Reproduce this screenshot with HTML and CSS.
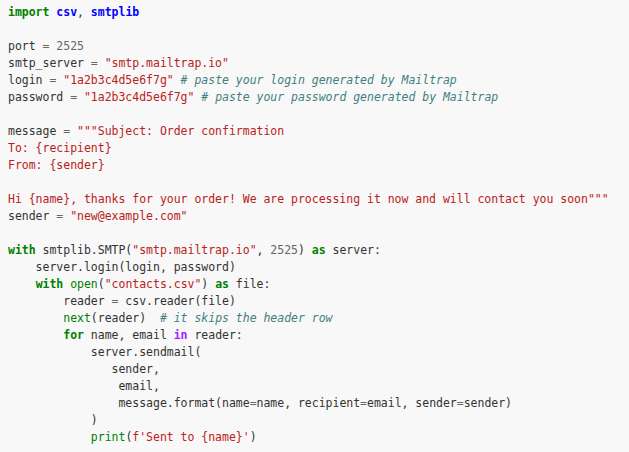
FILE: index.html
```html
<!DOCTYPE html>
<html lang="en">
<head>
<meta charset="utf-8">
<title>Code</title>
<link rel="stylesheet" href="styles.css">
</head>
<body>
<pre class="code"><span class="k">import</span> <span class="nn">csv</span>, <span class="nn">smtplib</span>

port <span class="o">=</span> <span class="m">2525</span>
smtp_server <span class="o">=</span> <span class="s">"smtp.mailtrap.io"</span>
login <span class="o">=</span> <span class="s">"1a2b3c4d5e6f7g"</span> <span class="c"># paste your login generated by Mailtrap</span>
password <span class="o">=</span> <span class="s">"1a2b3c4d5e6f7g"</span> <span class="c"># paste your password generated by Mailtrap</span>

message <span class="o">=</span> <span class="s">"""Subject: Order confirmation
To: {recipient}
From: {sender}

Hi {name}, thanks for your order! We are processing it now and will contact you soon"""</span>
sender <span class="o">=</span> <span class="s">"new@example.com"</span>

<span class="k">with</span> smtplib.SMTP(<span class="s">"smtp.mailtrap.io"</span>, <span class="m">2525</span>) <span class="k">as</span> server:
    server.login(login, password)
    <span class="k">with</span> <span class="nb">open</span>(<span class="s">"contacts.csv"</span>) <span class="k">as</span> file:
        reader <span class="o">=</span> csv.reader(file)
        <span class="nb">next</span>(reader)  <span class="c"># it skips the header row</span>
        <span class="k">for</span> name, email <span class="ow">in</span> reader:
            server.sendmail(
               sender,
                email,
                message.format(name<span class="o">=</span>name, recipient<span class="o">=</span>email, sender<span class="o">=</span>sender)
            )
            <span class="nb">print</span>(<span class="s">f'Sent to {name}'</span>)</pre>
</body>
</html>
```
FILE: styles.css
```css
html, body {
  margin: 0;
  padding: 0;
  background: #f8f8f8;
}

.code {
  margin: 0;
  padding: 4px 8px;
  font-family: "DejaVu Sans Mono", "Liberation Mono", monospace;
  font-size: 11.5px;
  letter-spacing: -0.02px;
  line-height: 17px;
  color: #333333;
  background: #f8f8f8;
}

.k { color: #008000; font-weight: bold; }
.nn { color: #0000ff; font-weight: bold; }
.nb { color: #008000; }
.s { color: #ba2121; }
.c { color: #408080; font-style: italic; }
.o { color: #666666; }
.m { color: #666666; }
.ow { color: #aa22ff; font-weight: bold; }
```
